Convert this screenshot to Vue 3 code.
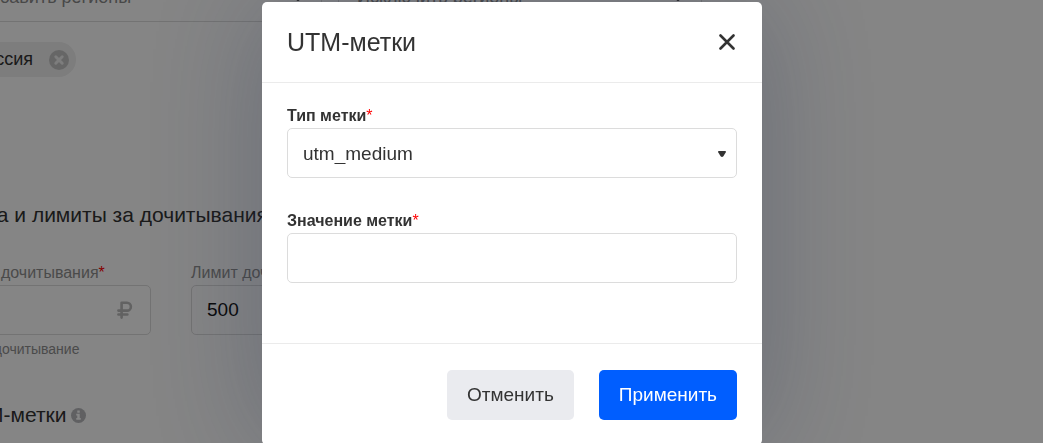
<script setup>
import { ref } from 'vue'

const utmType = ref('utm_medium')
const utmValue = ref('')
const includeRegion = ref('')
const excludeRegion = ref('')
const price = ref('')
const limit = ref('500')
const types = ['utm_source', 'utm_medium', 'utm_campaign', 'utm_content', 'utm_term']
</script>

<template>
  <div class="app">
    <main class="page" inert>
      <div class="regions">
        <div class="select-wrap">
          <select v-model="includeRegion" class="control muted" aria-label="Добавить регионы">
            <option value="">Добавить регионы</option>
          </select>
          <svg class="caret" viewBox="0 0 8 6"><path d="M.8 0h6.4q1.1.2.6 1.3L5.4 5.2Q4 6.6 2.6 5.2L.2 1.3Q-.3.2.8 0z" /></svg>
        </div>
        <div class="select-wrap">
          <select v-model="excludeRegion" class="control muted" aria-label="Исключить регионы">
            <option value="">Исключить регионы</option>
          </select>
          <svg class="caret" viewBox="0 0 8 6"><path d="M.8 0h6.4q1.1.2.6 1.3L5.4 5.2Q4 6.6 2.6 5.2L.2 1.3Q-.3.2.8 0z" /></svg>
        </div>
      </div>

      <div class="chips">
        <span class="chip">
          Россия
          <button type="button" class="chip-remove" aria-label="Удалить">
            <svg viewBox="0 0 20 20">
              <circle cx="10" cy="10" r="10" fill="#c4c4c4" />
              <path d="M6.8 6.8l6.4 6.4M13.2 6.8l-6.4 6.4" stroke="#efefef" stroke-width="3" stroke-linecap="round" />
            </svg>
          </button>
        </span>
      </div>

      <h2 class="section-title">Цена и лимиты за дочитывания</h2>

      <div class="limits">
        <div class="limit-field">
          <label class="small-label" for="price">Цена дочитывания<span class="req">*</span></label>
          <div class="input-wrap">
            <input id="price" v-model="price" class="control" type="text" />
            <svg class="ruble" viewBox="0 0 16 18" fill="none" stroke="#bcbcbc" stroke-width="2.6" stroke-linecap="round" stroke-linejoin="round">
              <path d="M4.6 16.6V1.8h5.4a3.9 3.9 0 0 1 0 7.8H1.4M1.4 13.5h9" />
            </svg>
          </div>
          <p class="hint">За 1 дочитывание</p>
        </div>
        <div class="limit-field">
          <label class="small-label" for="limit">Лимит дочитываний</label>
          <input id="limit" v-model="limit" class="control strong" type="text" />
        </div>
      </div>

      <h2 class="section-title utm-title">
        UTM-метки
        <svg class="info" viewBox="0 0 16 16">
          <circle cx="8" cy="8" r="8" fill="#b8b9bd" />
          <path d="M6.7 2.6h2.6v2.4H6.7zM5.6 6.2h3.7v4.5h1.1v1.9H5.6v-1.9h1.1V8.1H5.6z" fill="#fff" />
        </svg>
      </h2>
    </main>

    <div class="overlay">
      <form class="modal" role="dialog" aria-labelledby="dialog-title" @submit.prevent>
        <header class="modal-header">
          <h1 id="dialog-title">UTM-метки</h1>
          <button type="button" class="close" aria-label="Закрыть">
            <svg viewBox="0 0 16 16"><path d="M1.5 1.5l13 13M14.5 1.5l-13 13" /></svg>
          </button>
        </header>
        <div class="modal-body">
          <div class="field">
            <label for="utm-type">Тип метки<span class="req">*</span></label>
            <div class="select-wrap">
              <select id="utm-type" v-model="utmType" class="control">
                <option v-for="type in types" :key="type" :value="type">{{ type }}</option>
              </select>
              <svg class="caret" viewBox="0 0 8 6"><path d="M.8 0h6.4q1.1.2.6 1.3L5.4 5.2Q4 6.6 2.6 5.2L.2 1.3Q-.3.2.8 0z" /></svg>
            </div>
          </div>
          <div class="field">
            <label for="utm-value">Значение метки<span class="req">*</span></label>
            <input id="utm-value" v-model="utmValue" class="control" type="text" />
          </div>
        </div>
        <footer class="modal-footer">
          <button type="button" class="btn btn-cancel">Отменить</button>
          <button type="submit" class="btn btn-apply">Применить</button>
        </footer>
      </form>
    </div>
  </div>
</template>

<style>
body {
  margin: 0;
  overflow: hidden;
}
</style>

<style scoped>
* {
  box-sizing: border-box;
}

.app {
  height: 100vh;
  overflow: hidden;
  background: #fff;
  color: #333;
  font-family: "Liberation Sans", Arial, sans-serif;
  font-size: 18px;
}

button,
input,
select {
  font: inherit;
  color: inherit;
}

h1,
h2,
p {
  margin: 0;
  font-weight: 400;
}

.page {
  margin: -28px 0 0 -42px;
}

.regions {
  display: grid;
  grid-template-columns: 364px 364px;
  gap: 16px;
}

.control {
  display: block;
  width: 100%;
  height: 50px;
  padding: 0 15px;
  border: 1px solid #dcdcdc;
  border-radius: 5px;
  background: #fff;
  font-size: 19px;
  appearance: none;
  outline: none;
}

.control.muted {
  padding: 0 18px;
  color: #8a8a8a;
  font-size: 18px;
}

.control.strong {
  color: #111;
}

.select-wrap,
.input-wrap {
  display: grid;
  align-items: center;
}

.select-wrap > *,
.input-wrap > * {
  grid-area: 1 / 1;
}

.select-wrap .caret {
  justify-self: end;
  width: 8px;
  height: 6px;
  margin: 2px 11px 0 0;
  fill: #333;
  pointer-events: none;
}

.regions .caret {
  margin-right: 20px;
}

.chips {
  display: flex;
  margin-top: 20px;
}

.chip {
  display: flex;
  align-items: center;
  gap: 16px;
  height: 35px;
  padding: 0 7px 0 16px;
  border-radius: 18px;
  background: #efefef;
}

.chip-remove {
  display: flex;
  padding: 0;
  border: 0;
  background: none;
}

.chip-remove svg {
  width: 20px;
  height: 20px;
}

.section-title {
  margin-top: 126px;
  font-size: 21px;
  line-height: 24px;
}

.limits {
  display: grid;
  grid-template-columns: 193px 193px;
  gap: 40px;
  margin-top: 35px;
}

.small-label {
  display: block;
  padding-bottom: 1px;
  color: #8f8f8f;
  font-size: 16px;
  line-height: 22px;
}

.req {
  color: #f00;
  font-weight: 400;
}

.ruble {
  justify-self: end;
  width: 16px;
  height: 18px;
  margin-right: 18px;
}

.hint {
  margin-top: 4px;
  padding: 0 4px;
  color: #8f8f8f;
  font-size: 14px;
  line-height: 20px;
}

.utm-title {
  display: flex;
  align-items: center;
  gap: 5px;
  margin-top: 44px;
}

.info {
  width: 15px;
  height: 15px;
}

.overlay {
  position: fixed;
  inset: 0;
  display: flex;
  align-items: flex-start;
  justify-content: center;
  padding: 2px 19px 0 0;
  overflow: hidden;
  background: rgba(0, 0, 0, 0.48);
}

.modal {
  width: 500px;
  max-width: 100%;
  border-radius: 5px;
  background: #fff;
  box-shadow: 0 0 120px rgba(38, 50, 84, 0.3);
}

.modal-header {
  display: flex;
  align-items: center;
  justify-content: space-between;
  height: 81px;
  padding: 0 25px;
  border-bottom: 1px solid #ebebeb;
}

.modal-header h1 {
  font-size: 25px;
  line-height: 30px;
}

.close {
  display: flex;
  padding: 2px;
  border: 0;
  background: none;
}

.close svg {
  width: 16px;
  height: 16px;
  fill: none;
  stroke: #333;
  stroke-width: 2.6;
  stroke-linecap: round;
}

.modal-body {
  display: grid;
  gap: 30px;
  padding: 20px 25px 60px;
}

.field label {
  display: block;
  font-size: 16px;
  font-weight: 700;
  line-height: 25px;
}

.modal-footer {
  display: flex;
  justify-content: flex-end;
  gap: 25px;
  padding: 26px 25px 25px;
  border-top: 1px solid #ebebeb;
}

.btn {
  height: 50px;
  padding: 0 20px;
  border: 0;
  border-radius: 5px;
  font-size: 19px;
}

.btn-cancel {
  background: #eaebef;
}

.btn-apply {
  background: #005eff;
  color: #fff;
}
</style>
